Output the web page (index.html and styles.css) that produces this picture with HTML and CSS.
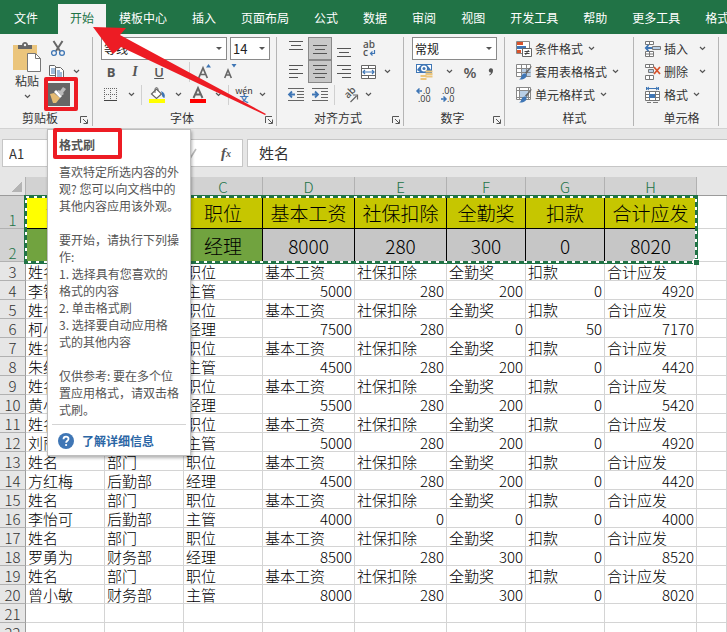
FILE: index.html
```
<!DOCTYPE html>
<html lang="zh-CN">
<head>
  <meta charset="UTF-8" />
  <meta name="viewport" content="width=device-width, initial-scale=1.0" />
  <title>工资条 - 格式刷</title>
  <link rel="stylesheet" href="styles.css">
</head>
<body>
  <!-- 公用图标 -->
  <svg class="defs" width="0" height="0" aria-hidden="true">
    <symbol id="chevron" viewBox="0 0 7 5"><path d="M1 1l2.500 2.500L6 1" fill="none" stroke="#555" stroke-width="1.200"/></symbol>
    <symbol id="launcher" viewBox="0 0 8 8"><path d="M.5 7V.5H7M3 3l4 4M7.500 3.500v4h-4" fill="none" stroke="#555"/></symbol>
    <symbol id="brush" viewBox="0 0 16 16">
      <path d="M15.500 3l-5 7-1.500-1.500 6.500-6.500z" fill="#666"/>
      <path d="M9.500 9.500c2 1 1.500 5-3.500 6H3c2-1 2-2 2.500-3.500.7-1.700 2.500-3 4-2.500z" fill="#3f76b5"/>
    </symbol>
  </svg>

  <nav class="tabs">
    <a href="#" class="tab tab-file">文件</a>
    <a href="#" class="tab active">开始</a>
    <a href="#" class="tab">模板中心</a>
    <a href="#" class="tab">插入</a>
    <a href="#" class="tab">页面布局</a>
    <a href="#" class="tab">公式</a>
    <a href="#" class="tab">数据</a>
    <a href="#" class="tab">审阅</a>
    <a href="#" class="tab">视图</a>
    <a href="#" class="tab">开发工具</a>
    <a href="#" class="tab">帮助</a>
    <a href="#" class="tab">更多工具</a>
    <a href="#" class="tab">格式</a>
  </nav>

  <div class="ribbon">
    <!-- 剪贴板 -->
    <section class="group group-clipboard">
      <div class="clipboard">
        <button class="btn paste">
          <svg width="28" height="30" viewBox="0 0 28 30">
            <path d="M0 3h24v25H0z" fill="#ebc57c"/>
            <path d="M5 7V3h4c0-4 6-4 6 0h4v4z" fill="#666"/>
            <circle cx="12" cy="3" r="1.200" fill="#f3f3f3"/>
            <path d="M14.500 11.500h8l5 5v13h-13z" fill="#fff" stroke="#777"/>
            <path d="M22.500 11.500v5h5" fill="none" stroke="#777"/>
          </svg>
          <span>粘贴</span>
          <svg class="chev" width="7" height="5"><use href="#chevron"/></svg>
        </button>
        <div class="clip-tools">
          <button class="btn" aria-label="剪切">
            <svg width="14" height="16" viewBox="0 0 14 16">
              <path d="M2.500 0l6.500 10M11.500 0L5 10" stroke="#666" stroke-width="2" fill="none"/>
              <circle cx="3" cy="12" r="2.400" fill="none" stroke="#3f76b5" stroke-width="1.300"/>
              <circle cx="11" cy="12" r="2.400" fill="none" stroke="#3f76b5" stroke-width="1.300"/>
            </svg>
          </button>
          <button class="btn copy" aria-label="复制">
            <svg width="16" height="14" viewBox="0 0 16 14">
              <path d="M.5.5h5l2 2v8h-7z" fill="#fff" stroke="#666"/>
              <path d="M2 4h4M2 6h4M2 8h4" stroke="#3f76b5"/>
              <path d="M6.500 2.500h5l3 3v8h-8z" fill="#fff" stroke="#666"/>
              <path d="M8 6h3M8 8h5M8 10h5M8 12h5" stroke="#3f76b5"/>
            </svg>
            <svg class="chev" width="7" height="5"><use href="#chevron"/></svg>
          </button>
          <button class="btn painter" aria-label="格式刷">
            <svg width="18" height="16" viewBox="0 0 18 16">
              <path d="M1 7l4-1 6 5-4 5H4z" fill="#e5bb73"/>
              <path d="M5 5l2-2 6 6-2 2z" fill="#fff"/>
              <path d="M8 4l2-1 1 1 3-4 3 2-3 4L15 7l-3 2z" fill="#bbb"/>
            </svg>
          </button>
        </div>
      </div>
      <footer class="group-name"><span>剪贴板</span><button class="btn launch" aria-label="剪贴板设置"><svg width="8" height="8"><use href="#launcher"/></svg></button></footer>
    </section>

    <!-- 字体 -->
    <section class="group group-font">
      <div class="row combos">
        <select class="combo combo-font" aria-label="字体"><option>等线</option></select>
        <select class="combo combo-size" aria-label="字号"><option>14</option></select>
      </div>
      <div class="row">
        <button class="btn cell-24 glyph bold">B</button>
        <button class="btn cell-24 glyph italic">I</button>
        <button class="btn cell-24 glyph underline">U</button>
        <button class="btn cell-16" aria-label="下划线选项"><svg class="chev" width="7" height="5"><use href="#chevron"/></svg></button>
        <i class="sep"></i>
        <button class="btn cell-26" aria-label="增大字号">
          <svg width="14" height="16" viewBox="0 0 14 16">
            <path d="M.7 14L5 4l4.300 10M2.500 10.500h5" fill="none" stroke="#666" stroke-width="1.700"/>
            <path d="M8 3.500L10.500 0 13 3.500z" fill="#3f76b5"/>
          </svg>
        </button>
        <button class="btn cell-26" aria-label="减小字号">
          <svg width="14" height="16" viewBox="0 0 14 16">
            <path d="M.7 14l3.300-8 3.300 8M2 11h4" fill="none" stroke="#666" stroke-width="1.600"/>
            <path d="M7.500 0L10 3.500 12.500 0z" fill="#3f76b5"/>
          </svg>
        </button>
      </div>
      <div class="row">
        <button class="btn cell-24" aria-label="边框">
          <svg width="14" height="14" viewBox="0 0 14 14">
            <path d="M0 .5h13M0 6.500h13M.5 0v13M6.500 0v13M12.500 0v13" stroke="#666" stroke-dasharray="1 1" fill="none"/>
            <path d="M0 12.500h13" stroke="#444"/>
          </svg>
        </button>
        <button class="btn cell-16" aria-label="边框选项"><svg class="chev" width="7" height="5"><use href="#chevron"/></svg></button>
        <i class="sep"></i>
        <button class="btn cell-26" aria-label="填充颜色">
          <svg width="16" height="16" viewBox="0 0 16 16">
            <path d="M2.500 7l5-5 5 5-5 4.500z" fill="#fff" stroke="#666" stroke-width="1.200"/>
            <path d="M6 6V1.500Q7.500-.5 9 1.500V4" fill="none" stroke="#666"/>
            <path d="M12 4q5 2 3.500 7-3-1-2.500-4z" fill="#3f76b5"/>
            <path d="M0 12h16v4H0z" fill="#ff0"/>
          </svg>
        </button>
        <button class="btn cell-16" aria-label="填充选项"><svg class="chev" width="7" height="5"><use href="#chevron"/></svg></button>
        <button class="btn cell-24" aria-label="字体颜色">
          <svg width="16" height="16" viewBox="0 0 16 16">
            <path d="M3.500 11L8 1l4.500 10M5 7.500h6" fill="none" stroke="#666" stroke-width="1.900"/>
            <path d="M0 12h16v4H0z" fill="#f00"/>
          </svg>
        </button>
        <button class="btn cell-16" aria-label="颜色选项"><svg class="chev" width="7" height="5"><use href="#chevron"/></svg></button>
        <i class="sep"></i>
        <button class="btn cell-26 pinyin" aria-label="拼音"><span>wén</span><b>文</b></button>
        <button class="btn cell-10" aria-label="拼音选项"><svg class="chev" width="7" height="5"><use href="#chevron"/></svg></button>
      </div>
      <footer class="group-name"><span>字体</span><button class="btn launch" aria-label="字体设置"><svg width="8" height="8"><use href="#launcher"/></svg></button></footer>
    </section>

    <!-- 对齐方式 -->
    <section class="group group-align">
      <div class="row">
        <button class="btn cell-24" aria-label="顶端对齐"><svg width="14" height="16" viewBox="0 0 14 16"><path d="M0 .5h14M2 4.500h10M0 8.500h14" stroke="#555"/></svg></button>
        <button class="btn cell-24 pressed" aria-label="垂直居中"><svg width="14" height="16" viewBox="0 0 14 16"><path d="M0 4.500h14M2 8.500h10M0 12.500h14" stroke="#555"/></svg></button>
        <button class="btn cell-24" aria-label="底端对齐"><svg width="14" height="16" viewBox="0 0 14 16"><path d="M0 7.500h14M2 11.500h10M0 15.500h14" stroke="#555"/></svg></button>
        <button class="btn cell-26" aria-label="自动换行">
          <svg width="13" height="18" viewBox="0 0 13 18">
            <text x="0" y="8" class="ico-ab">ab</text>
            <text x="0" y="16" class="ico-ab">c</text>
            <path d="M11.500 10v3.500H8M9.500 11.500l-2 2 2 2" fill="none" stroke="#3f76b5" stroke-width="1.200"/>
          </svg>
        </button>
      </div>
      <div class="row">
        <button class="btn cell-24" aria-label="左对齐"><svg width="14" height="13" viewBox="0 0 14 13"><path d="M0 .5h14M0 4.500h9M0 8.500h14M0 12.500h9" stroke="#555"/></svg></button>
        <button class="btn cell-24 pressed" aria-label="居中"><svg width="14" height="13" viewBox="0 0 14 13"><path d="M0 .5h14M2 4.500h10M0 8.500h14M2 12.500h10" stroke="#555"/></svg></button>
        <button class="btn cell-24" aria-label="右对齐"><svg width="14" height="13" viewBox="0 0 14 13"><path d="M0 .5h14M5 4.500h9M0 8.500h14M5 12.500h9" stroke="#555"/></svg></button>
        <button class="btn cell-26" aria-label="合并后居中">
          <svg width="16" height="16" viewBox="0 0 16 16">
            <path d="M.5 1.500h14v13H.5zM.5 4.500h14M.5 11.500h14M7.500 1v3M7.500 12v3" fill="#fff" stroke="#666"/>
            <path d="M2 8h11M4 6L2 8l2 2M11 6l2 2-2 2" fill="none" stroke="#3f76b5" stroke-width="1.200"/>
          </svg>
        </button>
        <button class="btn cell-10" aria-label="合并选项"><svg class="chev" width="7" height="5"><use href="#chevron"/></svg></button>
      </div>
      <div class="row">
        <button class="btn cell-24" aria-label="减少缩进">
          <svg width="16" height="13" viewBox="0 0 16 13"><path d="M0 .5h16M9 3.500h7M9 6.500h7M9 9.500h7M0 12.500h16" stroke="#666"/><path d="M7 6.500H1M4 3.500l-3 3 3 3" fill="none" stroke="#3f76b5" stroke-width="1.800"/></svg>
        </button>
        <button class="btn cell-24" aria-label="增加缩进">
          <svg width="16" height="13" viewBox="0 0 16 13"><path d="M0 .5h16M9 3.500h7M9 6.500h7M9 9.500h7M0 12.500h16" stroke="#666"/><path d="M0 6.500h6M3 3.500l3 3-3 3" fill="none" stroke="#3f76b5" stroke-width="1.800"/></svg>
        </button>
        <i class="sep"></i>
        <button class="btn cell-26" aria-label="方向">
          <svg width="17" height="16" viewBox="0 0 17 16">
            <text x="0" y="0" class="ico-ab" transform="translate(6 12) rotate(-45)">ab</text>
            <path d="M8.500 15l6-6M11 8h4.500v4.500" fill="none" stroke="#666" stroke-width="1.200"/>
          </svg>
        </button>
        <button class="btn cell-10" aria-label="方向选项"><svg class="chev" width="7" height="5"><use href="#chevron"/></svg></button>
      </div>
      <footer class="group-name"><span>对齐方式</span><button class="btn launch" aria-label="对齐设置"><svg width="8" height="8"><use href="#launcher"/></svg></button></footer>
    </section>

    <!-- 数字 -->
    <section class="group group-number">
      <div class="row combos">
        <select class="combo combo-number" aria-label="数字格式"><option>常规</option></select>
      </div>
      <div class="row">
        <button class="btn cell-24" aria-label="会计数字格式">
          <svg width="17" height="16" viewBox="0 0 17 16">
            <path d="M0 0h16v9H0z" fill="#3f76b5"/>
            <path d="M1 1h4L2 4.500 1 6zM15 1h-4l3 3.500 1 1.500zM1 8V6l3 2z" fill="#fff"/>
            <circle cx="8" cy="4.500" r="3" fill="#fff"/><circle cx="8" cy="4.500" r="1.500" fill="#3f76b5"/>
            <path d="M9.500 7.500h7M9.500 10h7M9.500 12.500h7M4.500 12h6M4.500 15h6" stroke="#ebc57c" stroke-width="2"/>
          </svg>
        </button>
        <button class="btn cell-26" aria-label="会计选项"><svg class="chev" width="7" height="5"><use href="#chevron"/></svg></button>
        <button class="btn cell-16 glyph percent">%</button>
        <button class="btn cell-26" aria-label="千位分隔"><svg width="6" height="8" viewBox="0 0 6 8"><path d="M1 1.500C2-.3 5-.3 5 2.500 5 5 3.500 6.500 1.500 7.500l-.3-.8C2.500 6 3 5.300 3 4.500 1.300 4.700.3 3.200 1 1.500z" fill="#555"/></svg></button>
      </div>
      <div class="row">
        <button class="btn cell-24" aria-label="增加小数位">
          <svg width="16" height="16" viewBox="0 0 16 16"><text x="7" y="7" class="ico-num">.0</text><text x="2" y="15" class="ico-num">.00</text><path d="M6 4H1M3.500 1.500L1 4l2.500 2.500" fill="none" stroke="#3f76b5" stroke-width="1.500"/></svg>
        </button>
        <button class="btn cell-24" aria-label="减少小数位">
          <svg width="16" height="16" viewBox="0 0 16 16"><text x="2" y="7" class="ico-num">.00</text><text x="7" y="15" class="ico-num">.0</text><path d="M1 12h5M3.500 9.500L6 12l-2.500 2.500" fill="none" stroke="#3f76b5" stroke-width="1.500"/></svg>
        </button>
      </div>
      <footer class="group-name"><span>数字</span><button class="btn launch" aria-label="数字设置"><svg width="8" height="8"><use href="#launcher"/></svg></button></footer>
    </section>

    <!-- 样式 -->
    <section class="group group-style">
      <button class="btn row item">
        <svg width="16" height="16" viewBox="0 0 16 16">
          <path d="M.5.500h13v12H.5z" fill="#fff" stroke="#888"/>
          <path d="M1 1h6v3H1zM1 9h4v3H1z" fill="#d8532c"/><path d="M1 5h9v3H1z" fill="#3f76b5"/>
          <path d="M6.500 7.500h9v8h-9z" fill="#fff" stroke="#666"/><path d="M8.500 10.500h5M8.500 12.500h5M12.500 9l-3 5" stroke="#444"/>
        </svg>
        <span>条件格式</span><svg class="chev" width="7" height="5"><use href="#chevron"/></svg>
      </button>
      <button class="btn row item">
        <svg width="16" height="16" viewBox="0 0 16 16">
          <path d="M.5.500h14v12H.5z" fill="#fff" stroke="#888"/><path d="M5 4h10v8H5z" fill="#b9cfe6"/>
          <path d="M.5 4.500h14M.5 8.500h14M5.500.500v12M10.500.500v12" stroke="#888"/>
          <use href="#brush"/>
        </svg>
        <span>套用表格格式</span><svg class="chev" width="7" height="5"><use href="#chevron"/></svg>
      </button>
      <button class="btn row item">
        <svg width="16" height="16" viewBox="0 0 16 16">
          <path d="M.5.500h14v12H.5z" fill="#fff" stroke="#888"/><path d="M3 4h9v6H3z" fill="#b9cfe6"/>
          <path d="M.5 3.500h14M.5 10.500h14M3.500.500v12M12.500.500v12" stroke="#888"/>
          <use href="#brush"/>
        </svg>
        <span>单元格样式</span><svg class="chev" width="7" height="5"><use href="#chevron"/></svg>
      </button>
      <footer class="group-name"><span>样式</span></footer>
    </section>

    <!-- 单元格 -->
    <section class="group group-cells">
      <button class="btn row item spread">
        <svg width="16" height="16" viewBox="0 0 16 16">
          <path d="M.5.500h8v3h-8zM4.500.500v3M.5 10.500h8v5h-8zM4.500 10.500v5M.5 13h8" fill="#fff" stroke="#777"/>
          <path d="M7.500 5.500h8v3h-8z" fill="#b9cfe6" stroke="#777"/>
          <path d="M7 7H1M3.500 4L.8 7l2.700 3" fill="none" stroke="#3f76b5" stroke-width="1.800"/>
        </svg>
        <span>插入</span><svg class="chev" width="7" height="5"><use href="#chevron"/></svg>
      </button>
      <button class="btn row item spread">
        <svg width="16" height="16" viewBox="0 0 16 16">
          <path d="M.5.500h8v3h-8zM4.500.500v3M.5 11.500h8v4h-8zM4.500 11.500v4" fill="#fff" stroke="#777"/>
          <path d="M3.500 5.500h5v3h-5z" fill="#b9cfe6" stroke="#777"/>
          <path d="M9 3l6 7M15 3L9 10" stroke="#d8532c" stroke-width="1.800"/>
        </svg>
        <span>删除</span><svg class="chev" width="7" height="5"><use href="#chevron"/></svg>
      </button>
      <button class="btn row item">
        <svg width="16" height="16" viewBox="0 0 16 16">
          <path d="M2 1.500h11M4 0L2 1.500 4 3M11 0l2 1.500L11 3M1.500 0v3M13.500 0v3" fill="none" stroke="#3f76b5"/>
          <path d="M.5 4.500h14v9H.5zM.5 7.500h14M.5 10.500h14M4.500 4.500v9M10.500 4.500v9" fill="#fff" stroke="#777"/>
          <path d="M4 7h6v4H4z" fill="#3f76b5"/><path d="M2 15.500h4M8 15.500h5" stroke="#777"/>
        </svg>
        <span>格式</span><svg class="chev" width="7" height="5"><use href="#chevron"/></svg>
      </button>
      <footer class="group-name"><span>单元格</span></footer>
    </section>
  </div>

  <div class="formula-bar">
    <input class="name-box" type="text" value="A1" aria-label="名称框">
    <div class="fx-box">
      <svg width="10" height="10" viewBox="0 0 10 10"><path d="M1 5l3 4 5-8" fill="none" stroke="#bbb" stroke-width="1.600"/></svg>
      <button class="btn fx">f<sub>x</sub></button>
    </div>
    <input class="formula" type="text" value="姓名" aria-label="编辑栏">
  </div>

  <div class="sheet">
    <table>
      <colgroup>
        <col class="c-num"><col class="c-s"><col class="c-s"><col class="c-s"><col class="c-l"><col class="c-l"><col class="c-s"><col class="c-s"><col class="c-l"><col>
      </colgroup>
      <thead>
        <tr><th class="corner"></th><th>A</th><th>B</th><th>C</th><th>D</th><th>E</th><th>F</th><th>G</th><th>H</th><th class="off"></th></tr>
      </thead>
      <tbody>
        <tr class="title"><th>1</th><td class="first">姓名</td><td>部门</td><td>职位</td><td>基本工资</td><td>社保扣除</td><td>全勤奖</td><td>扣款</td><td>合计应发</td><td></td></tr>
        <tr class="lead"><th>2</th><td class="g"></td><td class="g"></td><td class="g">经理</td><td>8000</td><td>280</td><td>300</td><td>0</td><td>8020</td><td></td></tr>
        <tr><th>3</th><td>姓名</td><td></td><td>职位</td><td>基本工资</td><td>社保扣除</td><td>全勤奖</td><td>扣款</td><td>合计应发</td><td></td></tr>
        <tr class="n"><th>4</th><td>李智</td><td></td><td>主管</td><td>5000</td><td>280</td><td>200</td><td>0</td><td>4920</td><td></td></tr>
        <tr><th>5</th><td>姓名</td><td></td><td>职位</td><td>基本工资</td><td>社保扣除</td><td>全勤奖</td><td>扣款</td><td>合计应发</td><td></td></tr>
        <tr class="n"><th>6</th><td>柯小</td><td></td><td>经理</td><td>7500</td><td>280</td><td>0</td><td>50</td><td>7170</td><td></td></tr>
        <tr><th>7</th><td>姓名</td><td></td><td>职位</td><td>基本工资</td><td>社保扣除</td><td>全勤奖</td><td>扣款</td><td>合计应发</td><td></td></tr>
        <tr class="n"><th>8</th><td>朱红</td><td></td><td>主管</td><td>4500</td><td>280</td><td>200</td><td>0</td><td>4420</td><td></td></tr>
        <tr><th>9</th><td>姓名</td><td></td><td>职位</td><td>基本工资</td><td>社保扣除</td><td>全勤奖</td><td>扣款</td><td>合计应发</td><td></td></tr>
        <tr class="n"><th>10</th><td>黄小</td><td></td><td>经理</td><td>5500</td><td>280</td><td>200</td><td>0</td><td>5420</td><td></td></tr>
        <tr><th>11</th><td>姓名</td><td></td><td>职位</td><td>基本工资</td><td>社保扣除</td><td>全勤奖</td><td>扣款</td><td>合计应发</td><td></td></tr>
        <tr class="n"><th>12</th><td>刘丽</td><td></td><td>主管</td><td>5000</td><td>280</td><td>200</td><td>0</td><td>4920</td><td></td></tr>
        <tr><th>13</th><td>姓名</td><td>部门</td><td>职位</td><td>基本工资</td><td>社保扣除</td><td>全勤奖</td><td>扣款</td><td>合计应发</td><td></td></tr>
        <tr class="n"><th>14</th><td>方红梅</td><td>后勤部</td><td>经理</td><td>4500</td><td>280</td><td>200</td><td>0</td><td>4420</td><td></td></tr>
        <tr><th>15</th><td>姓名</td><td>部门</td><td>职位</td><td>基本工资</td><td>社保扣除</td><td>全勤奖</td><td>扣款</td><td>合计应发</td><td></td></tr>
        <tr class="n"><th>16</th><td>李怡可</td><td>后勤部</td><td>主管</td><td>4000</td><td>0</td><td>0</td><td>0</td><td>4000</td><td></td></tr>
        <tr><th>17</th><td>姓名</td><td>部门</td><td>职位</td><td>基本工资</td><td>社保扣除</td><td>全勤奖</td><td>扣款</td><td>合计应发</td><td></td></tr>
        <tr class="n"><th>18</th><td>罗勇为</td><td>财务部</td><td>经理</td><td>8500</td><td>280</td><td>300</td><td>0</td><td>8520</td><td></td></tr>
        <tr><th>19</th><td>姓名</td><td>部门</td><td>职位</td><td>基本工资</td><td>社保扣除</td><td>全勤奖</td><td>扣款</td><td>合计应发</td><td></td></tr>
        <tr class="n"><th>20</th><td>曾小敏</td><td>财务部</td><td>主管</td><td>8000</td><td>280</td><td>300</td><td>0</td><td>8020</td><td></td></tr>
        <tr><th>21</th><td></td><td></td><td></td><td></td><td></td><td></td><td></td><td></td><td></td></tr>
        <tr><th>22</th><td></td><td></td><td></td><td></td><td></td><td></td><td></td><td></td><td></td></tr>
      </tbody>
    </table>
    <!-- 选区虚线框 -->
    <svg class="ants" width="675" height="70" viewBox="0 0 675 70">
      <rect x="1.500" y="1.500" width="671" height="66" fill="none" stroke="#217346" stroke-width="3"/>
      <rect x="2" y="2" width="670" height="65" fill="none" stroke="#fff" stroke-width="2" stroke-dasharray="3 5"/>
      <path d="M669 64h6v6h-6z" fill="#fff"/><path d="M670 65h5v5h-5z" fill="#217346"/>
    </svg>
  </div>

  <!-- 格式刷提示 -->
  <aside class="tooltip">
    <h2>格式刷</h2>
    <p>喜欢特定所选内容的外
观? 您可以向文档中的
其他内容应用该外观。

要开始，请执行下列操
作:
1. 选择具有您喜欢的
格式的内容
2. 单击格式刷
3. 选择要自动应用格
式的其他内容

仅供参考: 要在多个位
置应用格式，请双击格
式刷。</p>
    <a href="#" class="more">
      <svg width="16" height="16" viewBox="0 0 16 16"><circle cx="8" cy="8" r="8" fill="#3f76b5"/><path d="M5.500 6.200C5.500 2.800 10.700 3 10.500 6c-.1 1.700-2.400 1.800-2.400 3.700" fill="none" stroke="#fff" stroke-width="1.800"/><circle cx="8.100" cy="12" r="1.100" fill="#fff"/></svg>
      <span>了解详细信息</span>
    </a>
  </aside>

  <!-- 标注 -->
  <div class="mark mark-painter"></div>
  <div class="mark mark-title"></div>
  <svg class="arrow" width="174" height="90" viewBox="0 0 174 90"><path d="M0 0l33 1-6 7 146 79-1 1L28 20l-8 7z" fill="#ed1c24"/></svg>
</body>
</html>
```
FILE: styles.css
```
:root {
  --green: #217346;
  --ribbon: #f3f3f3;
  --line: #c6c6c6;
  --text: #333;
  --red: #ed1c24;
}

* {
  box-sizing: border-box;
}

body {
  margin: 0;
  height: 100vh;
  overflow: hidden;
  display: flex;
  flex-direction: column;
  position: relative;
  background: #fff;
  color: var(--text);
  font-family: "Noto Sans CJK SC", sans-serif;
  font-size: 12px;
  line-height: 16px;
}

.defs {
  position: absolute;
}

.btn {
  display: flex;
  align-items: center;
  justify-content: center;
  flex: none;
  padding: 0;
  border: 0;
  background: none;
  color: inherit;
  font: inherit;
}

svg {
  display: block;
  flex: none;
  overflow: visible;
}

/* 选项卡 */
.tabs {
  display: flex;
  flex: none;
  align-items: flex-end;
  height: 34px;
  background: var(--green);
  overflow: hidden;
}

.tab {
  flex: none;
  height: 30px;
  margin-left: 1px;
  padding: 0 12px;
  line-height: 28px;
  color: #fff;
  text-decoration: none;
  white-space: nowrap;
}

.tab-file {
  margin: 0;
  padding: 0 20px 0 14px;
}

.tab.active {
  margin: 0;
  background: var(--ribbon);
  color: var(--green);
}

/* 功能区 */
.ribbon {
  display: flex;
  flex: none;
  height: 95px;
  padding: 3px 0 2px;
  background: var(--ribbon);
  border-bottom: 1px solid #d2d2d2;
}

.group {
  display: flex;
  flex-direction: column;
  flex: none;
  border-right: 1px solid #b5b5b5;
}

.group-clipboard { width: 93px; }
.group-font { width: 184px; padding-left: 6px; }
.group-align { width: 127px; padding-left: 7px; }
.group-number { width: 101px; padding-left: 8px; }
.group-style { width: 129px; padding-left: 11px; }
.group-cells { width: 85px; padding-left: 11px; }

.row {
  display: flex;
  align-items: center;
  height: 23px;
}

.cell-10 { width: 10px; }
.cell-16 { width: 16px; }
.cell-24 { width: 24px; }
.cell-26 { width: 26px; }

.row .btn {
  height: 23px;
}

.sep {
  width: 1px;
  height: 20px;
  margin: 0 2px;
  background: #d0d0d0;
}

.group-name {
  display: flex;
  align-items: center;
  height: 16px;
  margin-top: auto;
}

.group-name span {
  flex: 1;
  text-align: center;
}

.group-clipboard .group-name {
  padding-right: 4px;
}

.launch {
  align-self: flex-end;
  width: 8px;
  height: 12px;
  margin-right: 3px;
}

.group-clipboard .launch {
  margin-right: 0;
}

.clipboard {
  display: flex;
  gap: 4px;
  padding-left: 12px;
}

.paste {
  flex-direction: column;
  justify-content: flex-start;
  width: 30px;
  height: 70px;
  padding-top: 5px;
}

.paste span {
  margin: 1px 0 5px;
}

.clip-tools {
  display: flex;
  flex-direction: column;
  align-items: flex-start;
}

.clip-tools .btn {
  width: 24px;
  height: 23px;
}

.clip-tools .copy {
  width: 34px;
  gap: 8px;
  padding-left: 3px;
}

.clip-tools .painter {
  background: #666;
}

.combos {
  gap: 3px;
  padding-left: 2px;
}

.combo {
  height: 23px;
  padding: 0 2px;
  border: 1px solid #8a8a8a;
  border-radius: 0;
  appearance: none;
  background: #fff url("data:image/svg+xml,%3Csvg xmlns='http://www.w3.org/2000/svg' width='6' height='3'%3E%3Cpath d='M0 0h6L3 3z' fill='%23555'/%3E%3C/svg%3E") no-repeat right 4px center;
  color: #222;
  font-family: inherit;
  font-size: 12px;
}

.combo-font { width: 126px; }
.combo-size { width: 40px; font-size: 13px; }
.combo-number { width: 85px; }

.group-number .combos {
  padding-left: 0;
}

.glyph {
  color: #555;
  font-family: "Open Sans", sans-serif;
  font-size: 13px;
}

.bold { font-weight: 700; }
.italic { font-family: "Liberation Serif", serif; font-style: italic; font-weight: 700; font-size: 14px; }
.underline { text-decoration: underline; font-weight: 600; }
.percent { font-size: 15px; font-weight: 600; }

.pinyin {
  flex-direction: column;
  font-size: 9px;
  line-height: 8px;
}

.pinyin b {
  color: #3f76b5;
}

.pressed {
  border: 1px solid #888;
  background: #c8c8c8;
}

.ico-ab {
  font: 600 10px "Open Sans", sans-serif;
  fill: #555;
}

.ico-num {
  font: 9px "Open Sans", sans-serif;
  fill: #333;
}

.item {
  justify-content: flex-start;
  gap: 3px;
}

.item .chev {
  margin-left: 2px;
}

.spread .chev {
  margin-left: 8px;
}

/* 编辑栏 */
.formula-bar {
  display: flex;
  flex: none;
  gap: 4px;
  height: 48px;
  padding: 10px 0 10px 2px;
  background: #e6e6e6;
}

.name-box,
.formula,
.fx-box {
  min-width: 0;
  border: 1px solid var(--line);
  background: #fff;
  color: #333;
  font-family: inherit;
}

.name-box {
  width: 120px;
  padding: 0 6px;
  font-size: 13px;
}

.fx-box {
  display: flex;
  align-items: center;
  justify-content: flex-end;
  gap: 24px;
  width: 117px;
  padding-right: 11px;
}

.fx {
  color: #555;
  font: italic 700 15px "Liberation Serif", serif;
}

.fx sub {
  font-size: 10px;
}

.formula {
  flex: 1;
  padding: 0 11px 2px;
  border-right: 0;
  font-size: 15px;
}

/* 工作表 */
.sheet {
  position: relative;
  flex: 1;
  min-height: 0;
}

table {
  width: 100%;
  table-layout: fixed;
  border-collapse: separate;
  border-spacing: 0;
  color: #000;
  font-size: 15px;
  font-weight: 300;
}

.c-num { width: 26px; }
.c-s { width: 79px; }
.c-l { width: 92px; }

th,
td {
  height: 19px;
  padding: 2px 2px 0;
  border-right: 1px solid #d4d4d4;
  border-bottom: 1px solid #d4d4d4;
  line-height: 16px;
  text-align: left;
  vertical-align: bottom;
  white-space: nowrap;
}

th {
  padding: 2px 0 0;
  background: #e6e6e6;
  color: #333;
  font-weight: 300;
  text-align: center;
}

thead th {
  background: #d2d2d2;
  border-right-color: #b1b1b1;
  border-bottom-color: #9b9b9b;
  color: var(--green);
}

thead .corner {
  background: linear-gradient(135deg, transparent 50%, #b4b4b4 50%) no-repeat right 3px bottom 3px / 11px 11px #e6e6e6;
}

thead .off {
  background: #e6e6e6;
  border-right: 0;
}

tbody th {
  border-right-color: #9b9b9b;
  border-bottom-color: #b1b1b1;
}

.n td:nth-child(n + 5) {
  text-align: right;
}

.title th,
.lead th {
  background: #d2d2d2;
  color: var(--green);
}

.title td,
.lead td {
  height: 33px;
  border-color: #000;
  font-size: 19px;
  line-height: 30px;
  text-align: center;
}

.title td { background: #c6c600; }
.title .first { background: #ff0; }
.lead td { background: #c6c6c6; }
.lead .g { background: #71a33f; }

.title td:last-child,
.lead td:last-child {
  background: #fff;
  border-color: #d4d4d4;
}

.ants {
  position: absolute;
  top: 18px;
  left: 24px;
}

/* 提示框 */
.tooltip {
  position: absolute;
  top: 129px;
  left: 47px;
  width: 144px;
  padding: 6px 4px;
  border: 1px solid #bebebe;
  background: #fff;
  box-shadow: 1px 2px 3px rgba(0, 0, 0, 0.3);
  color: #555;
}

.tooltip h2 {
  margin: 0 7px 10px;
  font-size: 12px;
  line-height: 17px;
}

.tooltip p {
  margin: 0;
  padding: 0 7px 6px;
  border-bottom: 1px solid #d4d4d4;
  line-height: 17px;
  white-space: pre;
}

.more {
  display: flex;
  align-items: center;
  gap: 8px;
  padding: 8px 6px 0;
  color: #2b66a5;
  font-weight: 700;
  text-decoration: none;
}

/* 红色标注 */
.mark {
  position: absolute;
  border: 4px solid var(--red);
  border-radius: 2px;
}

.mark-painter {
  top: 77px;
  left: 44px;
  width: 34px;
  height: 34px;
}

.mark-title {
  top: 128px;
  left: 53px;
  width: 69px;
  height: 31px;
}

.arrow {
  position: absolute;
  top: 27px;
  left: 93px;
}
```
